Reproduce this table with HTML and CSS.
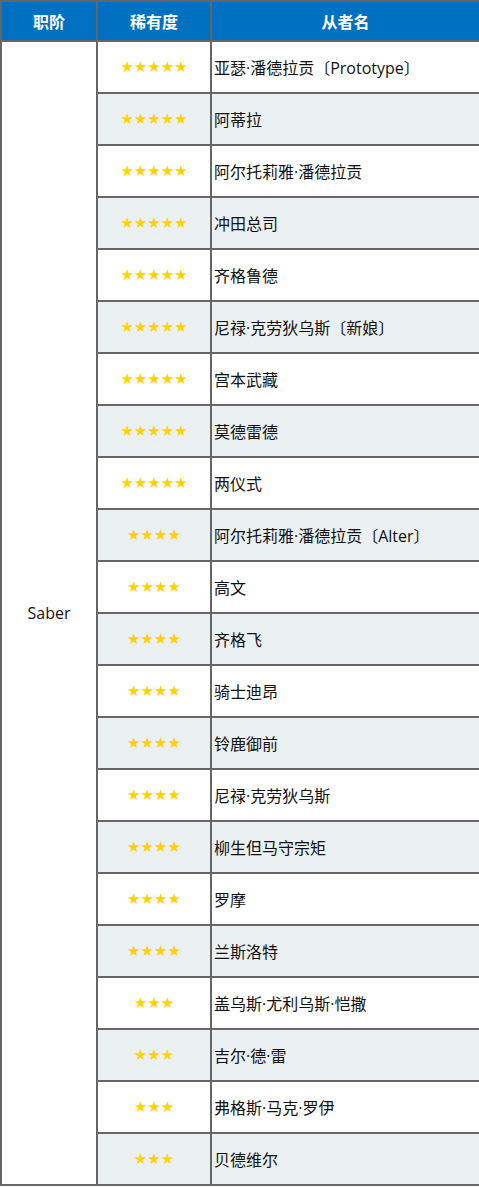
FILE: index.html
```html
<!DOCTYPE html>
<html lang="zh-CN">
<head>
<meta charset="utf-8">
<link rel="stylesheet" href="styles.css">
</head>
<body>
<table class="servants">
  <colgroup>
    <col class="c-class">
    <col class="c-rarity">
    <col class="c-name">
  </colgroup>
  <thead>
    <tr><th>职阶</th><th>稀有度</th><th>从者名</th></tr>
  </thead>
  <tbody>
    <tr><td class="cls" rowspan="22">Saber</td><td class="stars">★★★★★</td><td class="name">亚瑟·潘德拉贡〔Prototype〕</td></tr>
    <tr class="alt"><td class="stars">★★★★★</td><td class="name">阿蒂拉</td></tr>
    <tr><td class="stars">★★★★★</td><td class="name">阿尔托莉雅·潘德拉贡</td></tr>
    <tr class="alt"><td class="stars">★★★★★</td><td class="name">冲田总司</td></tr>
    <tr><td class="stars">★★★★★</td><td class="name">齐格鲁德</td></tr>
    <tr class="alt"><td class="stars">★★★★★</td><td class="name">尼禄·克劳狄乌斯〔新娘〕</td></tr>
    <tr><td class="stars">★★★★★</td><td class="name">宫本武藏</td></tr>
    <tr class="alt"><td class="stars">★★★★★</td><td class="name">莫德雷德</td></tr>
    <tr><td class="stars">★★★★★</td><td class="name">两仪式</td></tr>
    <tr class="alt"><td class="stars">★★★★</td><td class="name">阿尔托莉雅·潘德拉贡〔Alter〕</td></tr>
    <tr><td class="stars">★★★★</td><td class="name">高文</td></tr>
    <tr class="alt"><td class="stars">★★★★</td><td class="name">齐格飞</td></tr>
    <tr><td class="stars">★★★★</td><td class="name">骑士迪昂</td></tr>
    <tr class="alt"><td class="stars">★★★★</td><td class="name">铃鹿御前</td></tr>
    <tr><td class="stars">★★★★</td><td class="name">尼禄·克劳狄乌斯</td></tr>
    <tr class="alt"><td class="stars">★★★★</td><td class="name">柳生但马守宗矩</td></tr>
    <tr><td class="stars">★★★★</td><td class="name">罗摩</td></tr>
    <tr class="alt"><td class="stars">★★★★</td><td class="name">兰斯洛特</td></tr>
    <tr><td class="stars">★★★</td><td class="name">盖乌斯·尤利乌斯·恺撒</td></tr>
    <tr class="alt"><td class="stars">★★★</td><td class="name">吉尔·德·雷</td></tr>
    <tr><td class="stars">★★★</td><td class="name">弗格斯·马克·罗伊</td></tr>
    <tr class="alt"><td class="stars">★★★</td><td class="name">贝德维尔</td></tr>
  </tbody>
</table>
</body>
</html>
```
FILE: styles.css
```css
html, body {
  margin: 0;
  padding: 0;
  background: #ffffff;
}
.servants {
  width: 479px;
  border-collapse: collapse;
  table-layout: fixed;
  font-family: "Open Sans", "Noto Sans CJK SC", sans-serif;
  font-size: 16px;
  color: #111;
}
.c-class { width: 96px; }
.c-rarity { width: 114px; }
.c-name { width: 269px; }
.servants th, .servants td {
  border: 2px solid #666666;
  padding: 0;
}
.servants th {
  background: #0070c0;
  color: #ffffff;
  font-weight: bold;
  font-size: 16px;
  height: 38px;
  font-family: "Noto Sans CJK SC", sans-serif;
}
.servants td {
  height: 50px;
  vertical-align: middle;
}
.servants tr.alt td {
  background: #ebf0f3;
}
.servants td.cls {
  background: #ffffff;
  text-align: center;
}
.stars {
  text-align: center;
  color: #ffd200;
  font-family: "DejaVu Sans", sans-serif;
  font-size: 15px;
  line-height: 1;
}
.servants td.name {
  height: 46px;
  padding: 4px 0 0 2px;
  font-family: "Open Sans", "Noto Sans CJK SC", sans-serif;
  line-height: 1.2;
}
```
